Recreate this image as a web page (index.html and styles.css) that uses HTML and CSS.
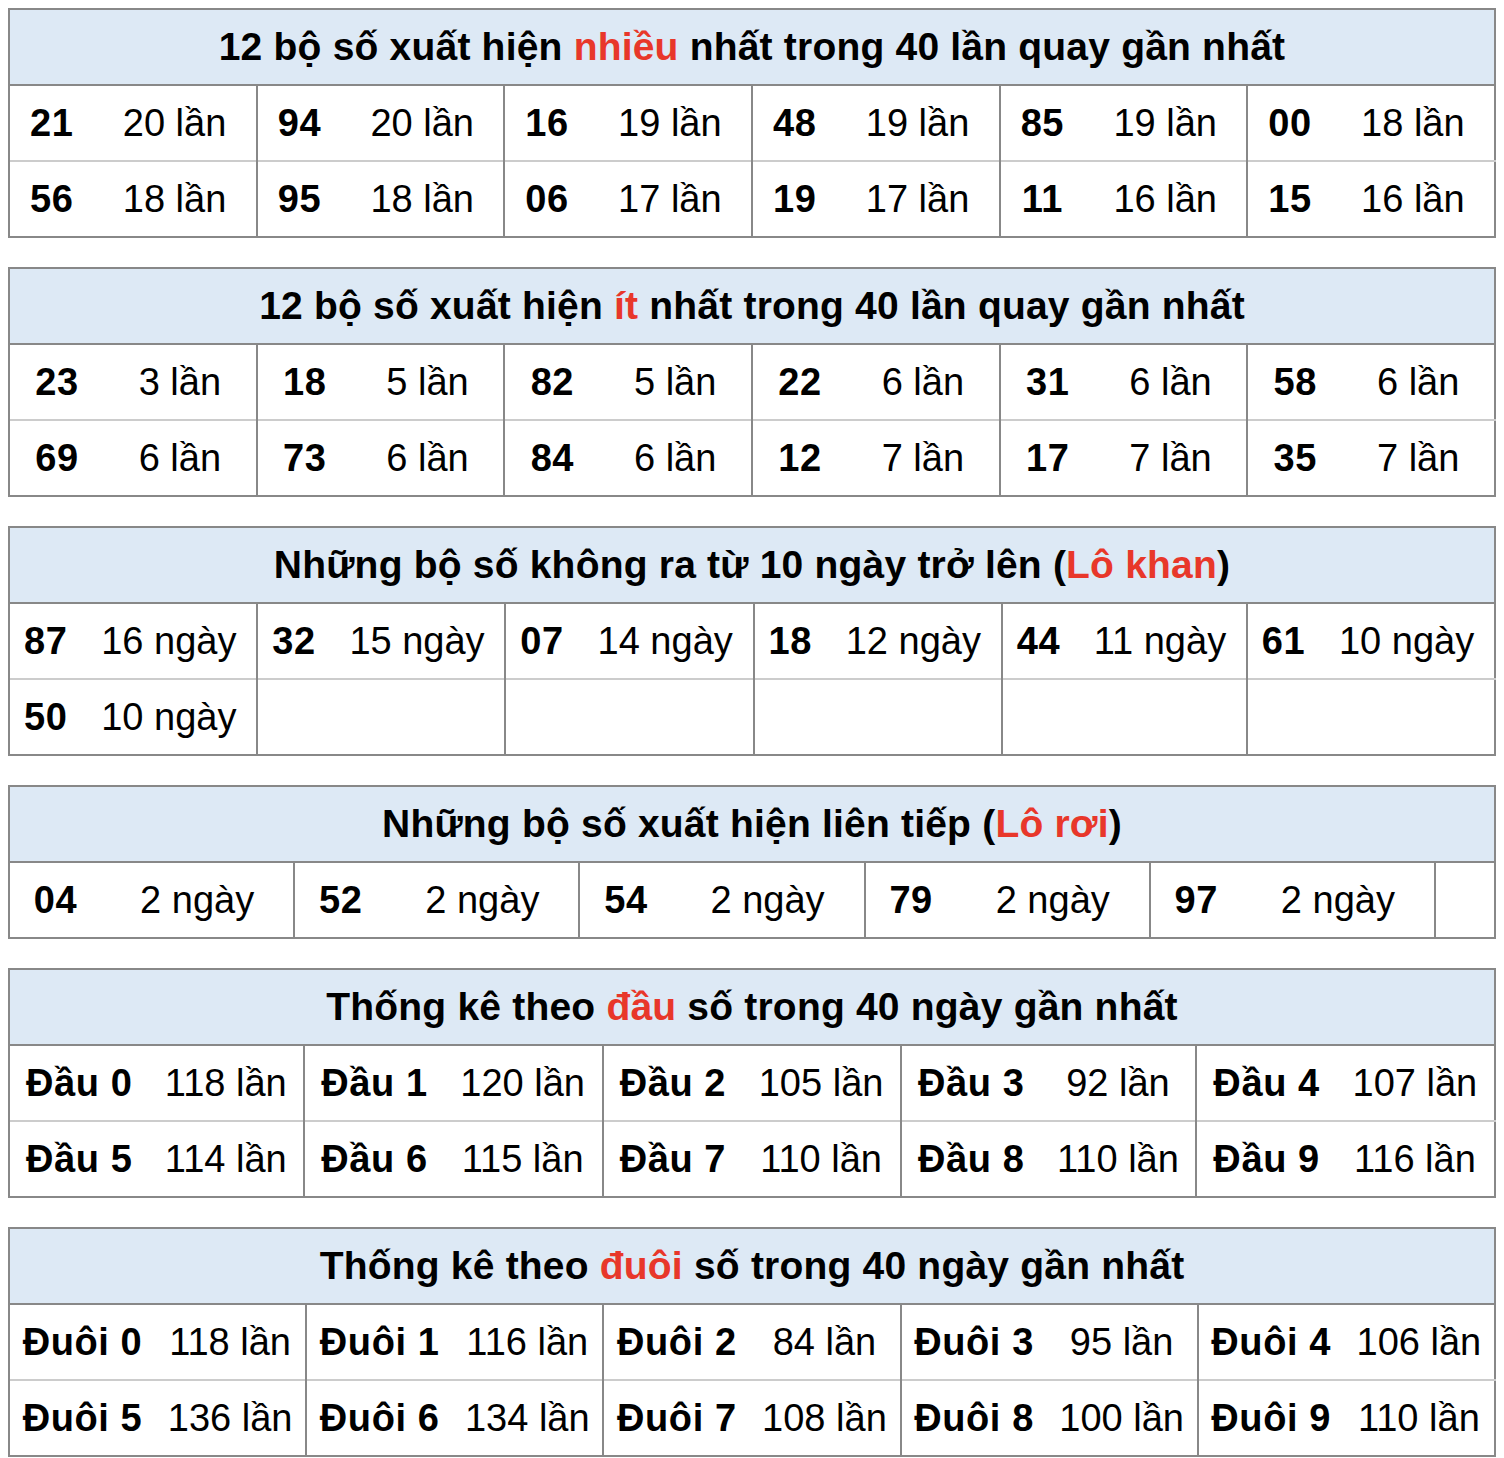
FILE: index.html
```html
<!DOCTYPE html>
<html lang="vi">
<head>
<meta charset="utf-8">
<title>Thống kê lô tô</title>
<link rel="stylesheet" href="styles.css">
</head>
<body>

<table class="stat">
  <thead>
    <tr><th colspan="12">12 bộ số xuất hiện <span class="hl">nhiều</span> nhất trong 40 lần quay gần nhất</th></tr>
  </thead>
  <tbody>
    <tr class="first">
      <td class="num">21</td><td class="val">20 lần</td>
      <td class="num">94</td><td class="val">20 lần</td>
      <td class="num">16</td><td class="val">19 lần</td>
      <td class="num">48</td><td class="val">19 lần</td>
      <td class="num">85</td><td class="val">19 lần</td>
      <td class="num">00</td><td class="val">18 lần</td>
    </tr>
    <tr>
      <td class="num">56</td><td class="val">18 lần</td>
      <td class="num">95</td><td class="val">18 lần</td>
      <td class="num">06</td><td class="val">17 lần</td>
      <td class="num">19</td><td class="val">17 lần</td>
      <td class="num">11</td><td class="val">16 lần</td>
      <td class="num">15</td><td class="val">16 lần</td>
    </tr>
  </tbody>
</table>

<table class="stat">
  <thead>
    <tr><th colspan="12">12 bộ số xuất hiện <span class="hl">ít</span> nhất trong 40 lần quay gần nhất</th></tr>
  </thead>
  <tbody>
    <tr class="first">
      <td class="num">23</td><td class="val">3 lần</td>
      <td class="num">18</td><td class="val">5 lần</td>
      <td class="num">82</td><td class="val">5 lần</td>
      <td class="num">22</td><td class="val">6 lần</td>
      <td class="num">31</td><td class="val">6 lần</td>
      <td class="num">58</td><td class="val">6 lần</td>
    </tr>
    <tr>
      <td class="num">69</td><td class="val">6 lần</td>
      <td class="num">73</td><td class="val">6 lần</td>
      <td class="num">84</td><td class="val">6 lần</td>
      <td class="num">12</td><td class="val">7 lần</td>
      <td class="num">17</td><td class="val">7 lần</td>
      <td class="num">35</td><td class="val">7 lần</td>
    </tr>
  </tbody>
</table>

<table class="stat">
  <thead>
    <tr><th colspan="12">Những bộ số không ra từ 10 ngày trở lên (<span class="hl">Lô khan</span>)</th></tr>
  </thead>
  <tbody>
    <tr class="first">
      <td class="num">87</td><td class="val">16 ngày</td>
      <td class="num">32</td><td class="val">15 ngày</td>
      <td class="num">07</td><td class="val">14 ngày</td>
      <td class="num">18</td><td class="val">12 ngày</td>
      <td class="num">44</td><td class="val">11 ngày</td>
      <td class="num">61</td><td class="val">10 ngày</td>
    </tr>
    <tr>
      <td class="num">50</td><td class="val">10 ngày</td>
      <td class="num"></td><td class="val"></td>
      <td class="num"></td><td class="val"></td>
      <td class="num"></td><td class="val"></td>
      <td class="num"></td><td class="val"></td>
      <td class="num"></td><td class="val"></td>
    </tr>
  </tbody>
</table>

<table class="stat">
  <thead>
    <tr><th colspan="12">Những bộ số xuất hiện liên tiếp (<span class="hl">Lô rơi</span>)</th></tr>
  </thead>
  <tbody>
    <tr class="first">
      <td class="num">04</td><td class="val">2 ngày</td>
      <td class="num">52</td><td class="val">2 ngày</td>
      <td class="num">54</td><td class="val">2 ngày</td>
      <td class="num">79</td><td class="val">2 ngày</td>
      <td class="num">97</td><td class="val">2 ngày</td>
      <td class="num"></td><td class="val"></td>
    </tr>
  </tbody>
</table>

<table class="stat">
  <thead>
    <tr><th colspan="10">Thống kê theo <span class="hl">đầu</span> số trong 40 ngày gần nhất</th></tr>
  </thead>
  <tbody>
    <tr class="first">
      <td class="num">Đầu 0</td><td class="val">118 lần</td>
      <td class="num">Đầu 1</td><td class="val">120 lần</td>
      <td class="num">Đầu 2</td><td class="val">105 lần</td>
      <td class="num">Đầu 3</td><td class="val">92 lần</td>
      <td class="num">Đầu 4</td><td class="val">107 lần</td>
    </tr>
    <tr>
      <td class="num">Đầu 5</td><td class="val">114 lần</td>
      <td class="num">Đầu 6</td><td class="val">115 lần</td>
      <td class="num">Đầu 7</td><td class="val">110 lần</td>
      <td class="num">Đầu 8</td><td class="val">110 lần</td>
      <td class="num">Đầu 9</td><td class="val">116 lần</td>
    </tr>
  </tbody>
</table>

<table class="stat last">
  <thead>
    <tr><th colspan="10">Thống kê theo <span class="hl">đuôi</span> số trong 40 ngày gần nhất</th></tr>
  </thead>
  <tbody>
    <tr class="first">
      <td class="num">Đuôi 0</td><td class="val">118 lần</td>
      <td class="num">Đuôi 1</td><td class="val">116 lần</td>
      <td class="num">Đuôi 2</td><td class="val">84 lần</td>
      <td class="num">Đuôi 3</td><td class="val">95 lần</td>
      <td class="num">Đuôi 4</td><td class="val">106 lần</td>
    </tr>
    <tr>
      <td class="num">Đuôi 5</td><td class="val">136 lần</td>
      <td class="num">Đuôi 6</td><td class="val">134 lần</td>
      <td class="num">Đuôi 7</td><td class="val">108 lần</td>
      <td class="num">Đuôi 8</td><td class="val">100 lần</td>
      <td class="num">Đuôi 9</td><td class="val">110 lần</td>
    </tr>
  </tbody>
</table>

</body>
</html>
```

FILE: styles.css
```css
html, body {
  background: #ffffff;
}

body {
  margin: 8px;
  font-family: "Liberation Sans", Arial, Helvetica, sans-serif;
  color: #000;
}

.stat {
  width: 100%;
  border-collapse: collapse;
  border: 2px solid #888888;
  margin: 0 0 29px 0;
  font-size: 38px;
}

.stat.last {
  margin-bottom: 0;
}

.stat th {
  height: 74px;
  padding: 0 10px;
  background: #dde9f5;
  font-weight: bold;
  font-size: 39px;
  letter-spacing: 0.2px;
  text-align: center;
  vertical-align: middle;
  border-bottom: 2px solid #888888;
}

.hl {
  color: #e8372a;
}

.stat td {
  height: 74px;
  padding: 0 10px;
  text-align: center;
  vertical-align: middle;
  white-space: nowrap;
  border-top: 2px solid #cccccc;
}

.stat tr.first td {
  border-top: 2px solid #888888;
}

.stat td.num {
  font-weight: bold;
  letter-spacing: 0.6px;
  border-left: 2px solid #888888;
}

.stat td.val {
  font-weight: normal;
  border-left: none;
}
```
